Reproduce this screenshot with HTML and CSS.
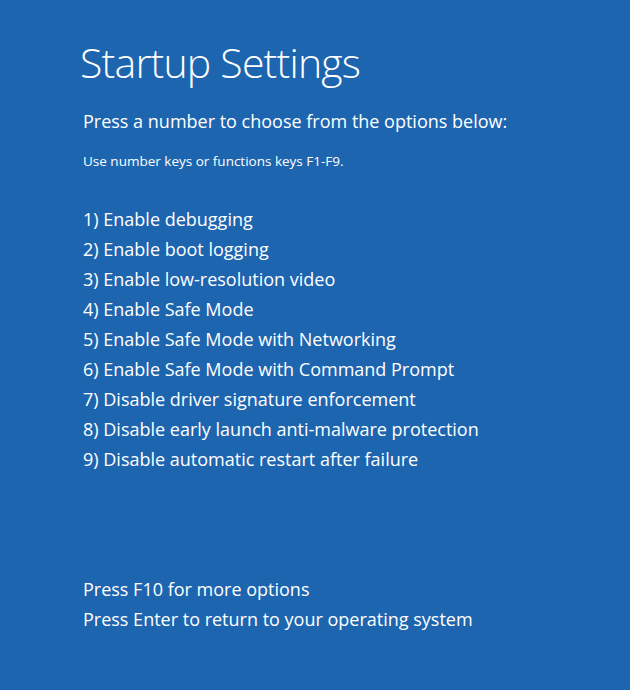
FILE: index.html
```html
<!DOCTYPE html>
<html>
<head>
<meta charset="utf-8">
<link rel="stylesheet" href="styles.css">
</head>
<body>
<main class="screen">
  <h1 class="title">Startup Settings</h1>
  <p class="subtitle">Press a number to choose from the options below:</p>
  <p class="hint">Use number keys or functions keys F1-F9.</p>
  <ol class="options">
    <li>1) Enable debugging</li>
    <li>2) Enable boot logging</li>
    <li>3) Enable low-resolution video</li>
    <li>4) Enable Safe Mode</li>
    <li>5) Enable Safe Mode with Networking</li>
    <li>6) Enable Safe Mode with Command Prompt</li>
    <li>7) Disable driver signature enforcement</li>
    <li>8) Disable early launch anti-malware protection</li>
    <li>9) Disable automatic restart after failure</li>
  </ol>
  <div class="footer">
    <p class="footer-line">Press F10 for more options</p>
    <p class="footer-line">Press Enter to return to your operating system</p>
  </div>
</main>
</body>
</html>
```
FILE: styles.css
```css
html, body {
  margin: 0;
  padding: 0;
  height: 100%;
  background: #1e65b0;
}
.screen {
  padding: 32px 0 0 83px;
  color: #ffffff;
  font-family: "Open Sans", "Noto Sans", sans-serif;
}
.title {
  margin: 0 0 0 -3px;
  font-size: 41px;
  font-weight: 300;
  letter-spacing: -0.8px;
  line-height: 60px;
}
.subtitle {
  margin: 14px 0 0;
  font-size: 18px;
  line-height: 30px;
}
.hint {
  margin: 15px 0 0;
  font-size: 13.5px;
  line-height: 20px;
}
.options {
  list-style: none;
  margin: 33px 0 0;
  padding: 0;
  font-size: 18px;
  line-height: 30px;
}
.footer {
  margin-top: 100px;
  font-size: 18px;
  line-height: 30px;
}
.footer-line {
  margin: 0;
}
```
